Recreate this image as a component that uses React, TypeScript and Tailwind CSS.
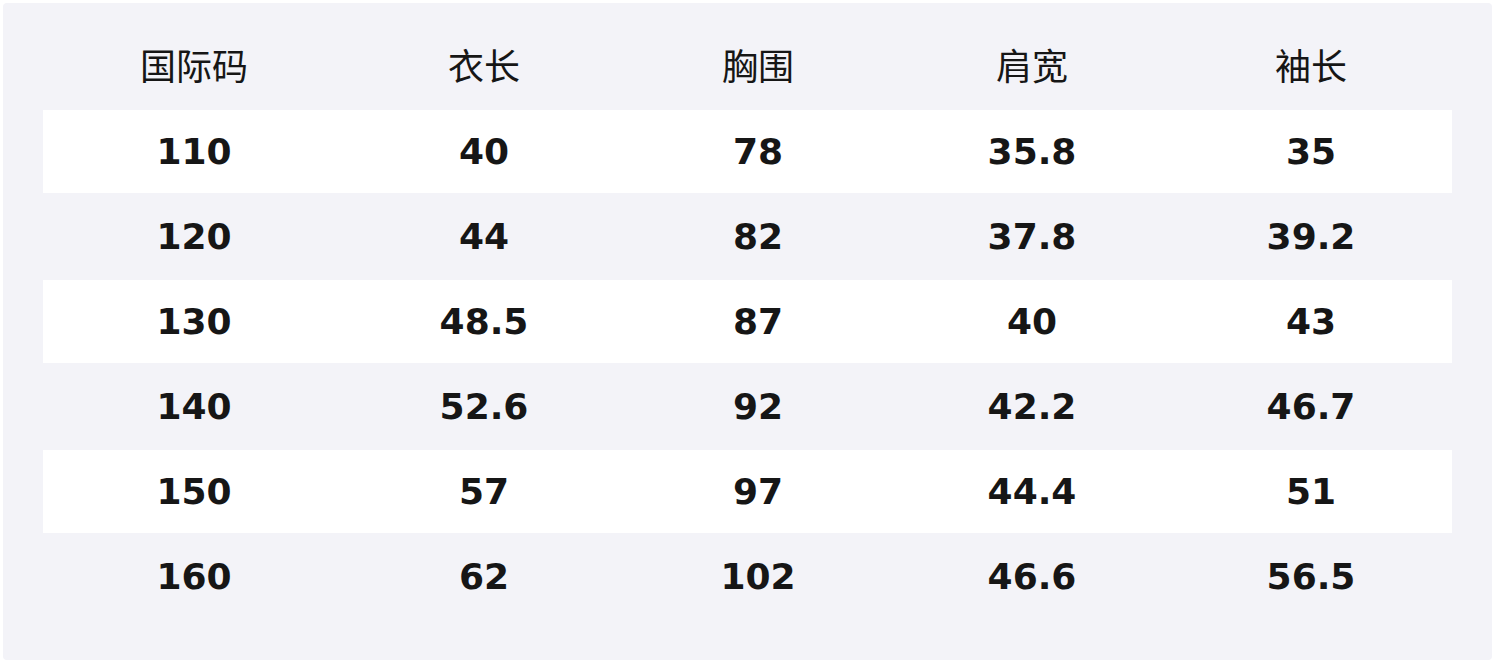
import React from "react";

const headers = ["国际码", "衣长", "胸围", "肩宽", "袖长"];
const rows = [
  ["110", "40", "78", "35.8", "35"],
  ["120", "44", "82", "37.8", "39.2"],
  ["130", "48.5", "87", "40", "43"],
  ["140", "52.6", "92", "42.2", "46.7"],
  ["150", "57", "97", "44.4", "51"],
  ["160", "62", "102", "46.6", "56.5"],
];

export default function App() {
  return (
    <div className="w-[1496px] h-[663px] bg-white pl-[3px] pt-[3px]">
      <div
        className="w-[1489px] h-[657px] bg-[#f3f3f8] rounded-[4px] px-[40px] pt-[40px] text-[#161616]"
        style={{ fontFamily: '"DejaVu Sans", "Noto Sans CJK SC", sans-serif' }}
      >
        <div className="grid grid-cols-[302px_278px_270px_278px_280px]">
          {headers.map((h) => (
            <div key={h} className="h-[67px] flex justify-center text-[36px] leading-[42px] font-normal" style={{ fontFamily: '"Noto Sans CJK SC", sans-serif' }}>
              {h}
            </div>
          ))}
        </div>
        {rows.map((r, i) => (
          <div
            key={i}
            className={`grid grid-cols-[302px_278px_270px_278px_280px] h-[85px] border-b-2 border-[#f3f3f8] ${i % 2 === 0 ? "bg-white" : "bg-transparent"}`}
          >
            {r.map((c, j) => (
              <div key={j} className="flex items-center justify-center text-[36px] font-bold leading-none pt-[1px]">
                {c}
              </div>
            ))}
          </div>
        ))}
      </div>
    </div>
  );
}
